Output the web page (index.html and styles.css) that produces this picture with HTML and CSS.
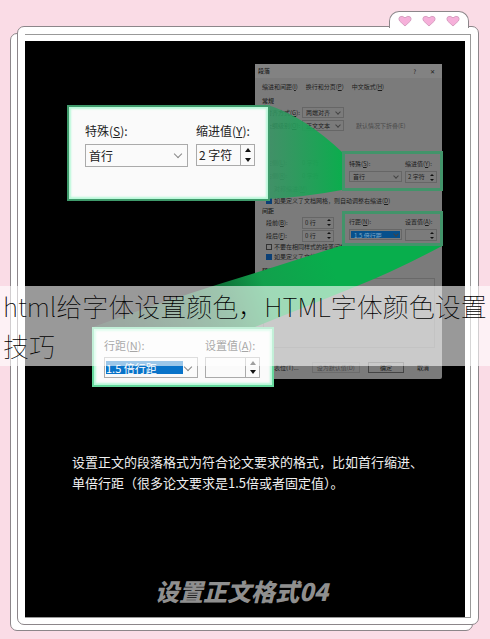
FILE: index.html
```html
<!DOCTYPE html>
<html lang="zh-CN">
<head>
<meta charset="utf-8">
<title>html给字体设置颜色，HTML字体颜色设置技巧</title>
<link rel="stylesheet" href="styles.css">
</head>
<body>
<main class="frame">
  <div class="tab" aria-hidden="true">
    <svg class="heart" viewBox="0 0 14 12"><path d="M7 11 L1.6 6 Q.2 3.8 1.6 2 Q4 .2 7 2.8 Q10 .2 12.4 2 Q13.8 3.8 12.4 6 Z"/></svg>
    <svg class="heart" viewBox="0 0 14 12"><path d="M7 11 L1.6 6 Q.2 3.8 1.6 2 Q4 .2 7 2.8 Q10 .2 12.4 2 Q13.8 3.8 12.4 6 Z"/></svg>
    <svg class="heart" viewBox="0 0 14 12"><path d="M7 11 L1.6 6 Q.2 3.8 1.6 2 Q4 .2 7 2.8 Q10 .2 12.4 2 Q13.8 3.8 12.4 6 Z"/></svg>
  </div>
  <div class="mat">
    <section class="panel">
      <form class="dialog">
        <header class="title"><span>段落</span><button type="button">?</button><button type="button">✕</button></header>
        <nav class="tabs"><a href="#indent">缩进和间距(<u>I</u>)</a><a href="#page">换行和分页(<u>P</u>)</a><a href="#cn">中文版式(<u>H</u>)</a></nav>
        <h3>常规</h3>
        <div class="row"><label for="align">对齐方式(<u>G</u>):</label><span class="pick"><select id="align"><option>两端对齐</option></select></span></div>
        <div class="row"><label for="level">大纲级别(<u>O</u>):</label><span class="pick"><select id="level"><option>正文文本</option></select></span><span class="muted">默认情况下折叠(E)</span></div>
        <div class="group indent" id="indent">
          <div class="left">
            <div class="row muted"><label for="l">左侧(<u>L</u>):</label><input id="l" value="0 字符"></div>
            <div class="row muted"><label for="r">右侧(<u>R</u>):</label><input id="r" value="0 字符"></div>
            <div class="row muted mirror">对称缩进(<u>M</u>)</div>
          </div>
          <div class="mark">
            <label for="sp">特殊(<u>S</u>):</label><label for="by">缩进值(<u>Y</u>):</label>
            <span class="pick"><select id="sp"><option>首行</option></select></span>
            <span class="spin"><input id="by" value="2 字符"><span class="arrows"><i></i><i></i></span></span>
          </div>
        </div>
        <label class="check"><input type="checkbox" checked><span>如果定义了文档网格，则自动调整右缩进(<u>D</u>)</span></label>
        <div class="group">
          <div class="left">
            <h3>间距</h3>
            <div class="row"><label for="b">段前(<u>B</u>):</label><span class="spin"><input id="b" value="0 行"><span class="arrows"><i></i><i></i></span></span></div>
            <div class="row"><label for="f">段后(<u>F</u>):</label><span class="spin"><input id="f" value="0 行"><span class="arrows"><i></i><i></i></span></span></div>
            <label class="check"><input type="checkbox"><span>不要在相同样式的段落间增加间距(<u>C</u>)</span></label>
            <label class="check"><input type="checkbox" checked><span>如果定义了文档网格，则对齐到网格(<u>W</u>)</span></label>
          </div>
          <div class="mark spacing">
            <label for="ln">行距(<u>N</u>):</label><label for="at">设置值(<u>A</u>):</label>
            <span class="pick chosen"><select id="ln"><option>1.5 倍行距</option></select></span>
            <span class="spin"><input id="at"><span class="arrows"><i></i><i></i></span></span>
          </div>
        </div>
        <h3 class="preview-title">预览</h3>
        <div class="preview"></div>
        <footer class="actions"><button type="button" class="plain">制表位(T)...</button><button type="button" class="muted">设为默认值(D)</button><button type="button" class="ok">确定</button><button type="button" class="plain">取消</button></footer>
      </form>

      <svg class="beams" viewBox="0 0 441 576" aria-hidden="true">
        <defs>
          <linearGradient id="near"><stop offset="0" stop-color="#3e9068" stop-opacity=".8"/><stop offset="1" stop-color="#08ae4c" stop-opacity=".97"/></linearGradient>
          <linearGradient id="far" gradientUnits="userSpaceOnUse" x1="80" y1="290" x2="300" y2="205"><stop offset="0" stop-color="#0c4023" stop-opacity=".5"/><stop offset=".55" stop-color="#0e773a"/><stop offset=".7" stop-color="#12a04c"/><stop offset="1" stop-color="#08ae4c"/></linearGradient>
        </defs>
        <path fill="url(#near)" d="M230 64H243Q280 76 317 111V149Q280 156 243 158H230Z"/>
        <path fill="url(#far)" d="M68 286Q150 256 230 232L315 205H417Q370 230 332 245Q275 268 230 286Z"/>
      </svg>

      <div class="callout first">
        <label for="special">特殊(<u>S</u>):</label><label for="value">缩进值(<u>Y</u>):</label>
        <span class="pick"><select id="special"><option>首行</option></select></span>
        <span class="spin"><input id="value" value="2 字符"><span class="arrows"><i></i><i></i></span></span>
      </div>
      <div class="callout second">
        <label for="line">行距(<u>N</u>):</label><label for="set">设置值(<u>A</u>):</label>
        <span class="pick chosen"><select id="line"><option>1.5 倍行距</option></select></span>
        <span class="spin"><input id="set"><span class="arrows"><i></i><i></i></span></span>
      </div>

      <p class="caption">设置正文的段落格式为符合论文要求的格式，比如首行缩进、<br>单倍行距（很多论文要求是1.5倍或者固定值）。</p>
      <h2 class="step">设置正文格式04</h2>
    </section>
  </div>
</main>
<h1 class="banner">html给字体设置颜色，HTML字体颜色设置技巧</h1>
</body>
</html>
```
FILE: styles.css
```css
* { box-sizing: border-box; }

body {
  margin: 0;
  min-height: 100vh;
  display: flex;
  position: relative;
  isolation: isolate;
  background: #fadce6;
  font-family: "Noto Sans CJK SC", sans-serif;
}

h1, h2, h3, p { margin: 0; }
input, select, button { font: inherit; color: inherit; margin: 0; padding: 0; border: 0; border-radius: 0; background: none; }
select { appearance: none; }
a { color: inherit; text-decoration: none; }

/* Stacked paper frame */
.frame {
  position: relative;
  flex: 1;
  display: flex;
  margin: 26px 11px 14px 17px;
  padding: 7px 7px 6px;
  border: 1px solid #8c868a;
  border-radius: 7px;
  background: #fff;
}
.frame::before {
  content: "";
  position: absolute;
  z-index: -1;
  inset: 6px 5px -7px -8px;
  border: 1px solid #8c868a;
  border-radius: 7px;
  background: #fff;
}
.tab {
  position: absolute;
  top: -16px;
  right: 9px;
  width: 80px;
  height: 17px;
  display: flex;
  justify-content: space-between;
  align-items: center;
  padding: 1px 8px 0;
  border: 1px solid #8c868a;
  border-bottom: 0;
  border-radius: 10px 10px 0 0;
  background: #fff;
}
.heart { width: 14px; height: 12px; fill: #f6b0da; stroke: #d9a0c2; stroke-width: 1; }
.mat {
  flex: 1;
  display: flex;
  padding: 6px 5px 0 0;
  border: 1px solid #999;
  border-left: 0;
}
.panel {
  position: relative;
  flex: 1;
  display: flex;
  flex-direction: column;
  background: #000;
  overflow: hidden;
}

/* Dimmed settings dialog */
.dialog {
  width: 187px;
  height: 315px;
  margin: 23px 0 0 230px;
  display: flex;
  flex-direction: column;
  border-radius: 2px;
  background: #7b7b7b;
  color: #1c1c1c;
  font-size: 6px;
  line-height: 10px;
  white-space: nowrap;
}
.dialog h3 { height: 10px; padding-left: 7px; font-size: 6px; font-weight: 500; }
.title { display: flex; gap: 14px; height: 14px; padding: 2px 7px 0 3px; background: #828282; }
.title span { flex: 1; font-weight: 500; }
.tabs { display: flex; gap: 8px; height: 18px; padding: 4px 7px 0; }
.row { display: flex; align-items: center; height: 13px; padding-left: 11px; }
.row label { width: 36px; flex: none; }
.row input { width: 20px; }
.row > .muted { margin-left: 12px; }
.muted { color: #484848; }
.mirror { padding-left: 19px; }
.pick, .spin { position: relative; display: flex; border: 1px solid #666; }
.dialog .pick { width: 42px; height: 11px; }
.pick select { width: 100%; padding-left: 3px; }
.pick::after {
  content: "";
  position: absolute;
  top: 2px;
  right: 3px;
  width: 3px;
  height: 3px;
  border: solid #444;
  border-width: 0 1px 1px 0;
  rotate: 45deg;
}
.spin input { flex: 1; width: 0; padding-left: 2px; }
.arrows { display: grid; width: 8px; }
.arrows i { place-self: center; border: 2px solid transparent; border-bottom: 2px solid #111; border-top: 0; }
.arrows i + i { rotate: 180deg; }
.dialog .spin { width: 32px; height: 12px; }

.group { display: grid; grid-template-columns: 87px 101px; height: 58px; align-items: start; }
.group.indent { height: 45px; margin-top: 19px; }
.indent .left { padding-top: 5px; }
.mark {
  display: grid;
  grid-template-columns: 54px 32px;
  grid-template-rows: 12px 12px;
  column-gap: 2px;
  height: 40px;
  padding: 5px 4px;
  border: 3px solid #42946a;
  background: #7b7b7b;
}
.mark .pick { width: 53px; }
.mark.spacing { height: 35px; margin-top: 5px; padding-top: 3px; }
.check { display: flex; align-items: center; gap: 2px; height: 10px; padding-left: 11px; }
.check input { appearance: none; flex: none; width: 6px; height: 6px; border: 1px solid #333; }
.check input:checked { background: #0a3f75; border-color: #0a3f75; }
.chosen select { margin: 1px; background: #07508c; color: #7fa9c8; }
.preview-title { margin-top: 2px; }
.preview { height: 70px; margin: 2px 7px 0 8px; border: 1px solid #696969; }
.actions { display: flex; justify-content: space-between; margin-top: 14px; padding: 0 8px; }
.actions button { height: 11px; padding: 0 4px; border: 1px solid #6c6c6c; }
.actions .plain { border-color: transparent; }
.actions .ok { padding: 0 11px; border-color: #444; }

.beams { position: absolute; top: 0; left: 0; width: 441px; height: 576px; }

/* Magnified controls over the dialog */
.callout {
  position: absolute;
  display: grid;
  align-content: start;
  border: 2px solid #3f9a6b;
  background: #fafafa;
  box-shadow: inset 0 0 2px 2px #b8f8d8;
  color: #222;
  font-size: 12px;
  line-height: 18px;
  white-space: nowrap;
}
.callout .arrows { width: 14px; border-left: 1px solid #aaa; }
.callout .arrows i { border-width: 0 3px 4px; }
.callout .pick, .callout .spin { border-color: #aaa; }
.callout .pick::after { top: 6px; right: 6px; width: 5px; height: 5px; border-color: #888; }
.first { top: 64px; left: 42px; width: 203px; height: 96px; padding: 15px 12px 0 16px; grid-template-columns: 103px 59px; grid-template-rows: 22px 23px; column-gap: 8px; }
.first .spin { height: 22px; }
.second { top: 286px; left: 67px; width: 182px; height: 60px; padding: 7px 10px 0; grid-template-columns: 94px 55px; grid-template-rows: 21px 21px; column-gap: 7px; border-color: #66d99d; font-size: 11px; }
.second .chosen select { margin: 3px 14px 3px 1px; padding: 0; line-height: 12px; background: #0873c9; color: #fff; }

.caption { margin: 72px 0 0 47px; color: #f0f0f0; font-size: 13px; line-height: 21px; white-space: nowrap; }
.step {
  margin: auto auto 9px 130px;
  color: #8f8f8f;
  font-size: 24px;
  font-weight: 900;
  font-style: italic;
  line-height: 34px;
}

.banner {
  position: absolute;
  top: 286px;
  left: 0;
  right: 0;
  padding: 0 3px;
  background: rgb(255 255 255 / 60%);
  color: #000;
  font-size: 26px;
  font-weight: 100;
  line-height: 40px;
}
```
